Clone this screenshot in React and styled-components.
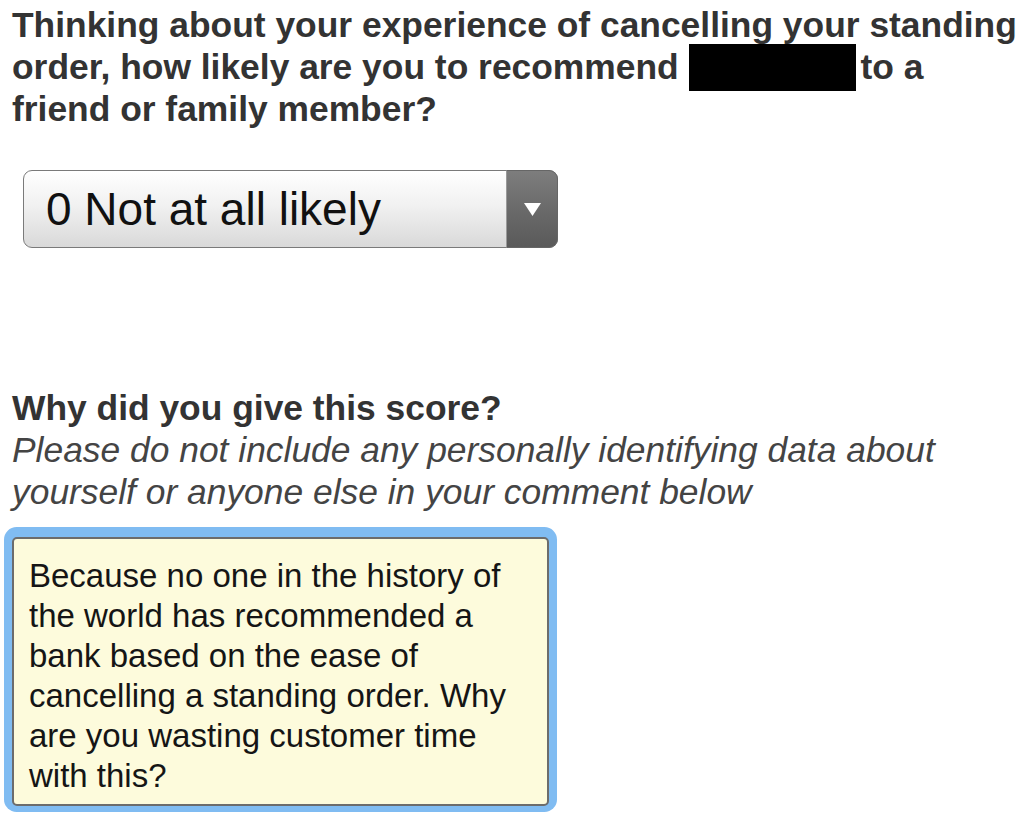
import React from 'react';
import styled, { createGlobalStyle } from 'styled-components';

const GlobalStyle = createGlobalStyle`
  html, body {
    margin: 0;
    padding: 0;
    background: #ffffff;
  }
  body {
    font-family: "Liberation Sans", Arial, sans-serif;
  }
`;

const Page = styled.main`
  width: 1024px;
  min-height: 822px;
  padding: 4px 0 0 12px;
  box-sizing: border-box;
  font-family: "Liberation Sans", Arial, sans-serif;
`;

const Question = styled.h1`
  margin: 0;
  width: 1010px;
  font-size: 35.4px;
  line-height: 42px;
  font-weight: bold;
  color: #333333;
`;

const Redacted = styled.span`
  display: inline-block;
  width: 167px;
  height: 47px;
  margin: -4px 5px -4px 0;
  vertical-align: -8px;
  background: #000000;
`;

const SelectWrap = styled.div`
  position: relative;
  width: 535px;
  height: 78px;
  margin: 40px 0 0 11px;
`;

const Select = styled.select`
  appearance: none;
  -webkit-appearance: none;
  width: 100%;
  height: 100%;
  box-sizing: border-box;
  padding: 0 60px 0 22px;
  border: 1.5px solid #7a7a7a;
  border-radius: 9px;
  background: linear-gradient(#ffffff, #f1f1f1 45%, #d9d9d9);
  font-family: "Liberation Sans", Arial, sans-serif;
  font-size: 46px;
  color: #111111;
  outline: none;
`;

const ArrowPane = styled.span`
  position: absolute;
  top: 0;
  right: 0;
  width: 52px;
  height: 100%;
  box-sizing: border-box;
  border: 1.5px solid #666666;
  border-left: 1px solid #9a9a9a;
  border-radius: 0 9px 9px 0;
  background: linear-gradient(#7d7d7d, #6a6a6a 50%, #5a5a5a);
  display: flex;
  align-items: center;
  justify-content: center;
  pointer-events: none;
`;

const Section = styled.section`
  margin-top: 139px;
`;

const Prompt = styled.h2`
  margin: 0;
  font-size: 35.4px;
  line-height: 42px;
  font-weight: bold;
  color: #333333;
`;

const Hint = styled.p`
  margin: 0;
  width: 970px;
  font-size: 35.4px;
  line-height: 42px;
  font-style: italic;
  color: #444444;
`;

const Comment = styled.textarea`
  display: block;
  width: 537px;
  height: 269px;
  box-sizing: border-box;
  margin: 24px 0 0 0;
  padding: 17px 18px 8px 15px;
  border: 2px solid #6c6c6c;
  border-radius: 5px;
  box-shadow: 0 -2px 0 8px #80bcf2;
  background: #fdfbdc;
  font-family: "Liberation Sans", Arial, sans-serif;
  font-size: 33px;
  line-height: 40px;
  color: #151515;
  resize: none;
  overflow: hidden;
  outline: none;
`;

const comment =
  'Because no one in the history of the world has recommended a bank based on the ease of cancelling a standing order. Why are you wasting customer time with this?';

export default function App() {
  return (
    <Page>
      <GlobalStyle />
      <Question>
        Thinking about your experience of cancelling your standing order, how likely are you to
        recommend <Redacted />to a friend or family member?
      </Question>

      <SelectWrap>
        <Select defaultValue="0">
          <option value="0">0 Not at all likely</option>
          {[1, 2, 3, 4, 5, 6, 7, 8, 9].map((n) => (
            <option key={n} value={n}>{n}</option>
          ))}
          <option value="10">10 Extremely likely</option>
        </Select>
        <ArrowPane>
          <svg width="19" height="15" viewBox="0 0 19 15">
            <path d="M1 1 L18 1 L9.5 14 Z" fill="#ffffff" />
          </svg>
        </ArrowPane>
      </SelectWrap>

      <Section>
        <Prompt>Why did you give this score?</Prompt>
        <Hint>
          Please do not include any personally identifying data about yourself or anyone else in
          your comment below
        </Hint>
        <Comment defaultValue={comment} />
      </Section>
    </Page>
  );
}
